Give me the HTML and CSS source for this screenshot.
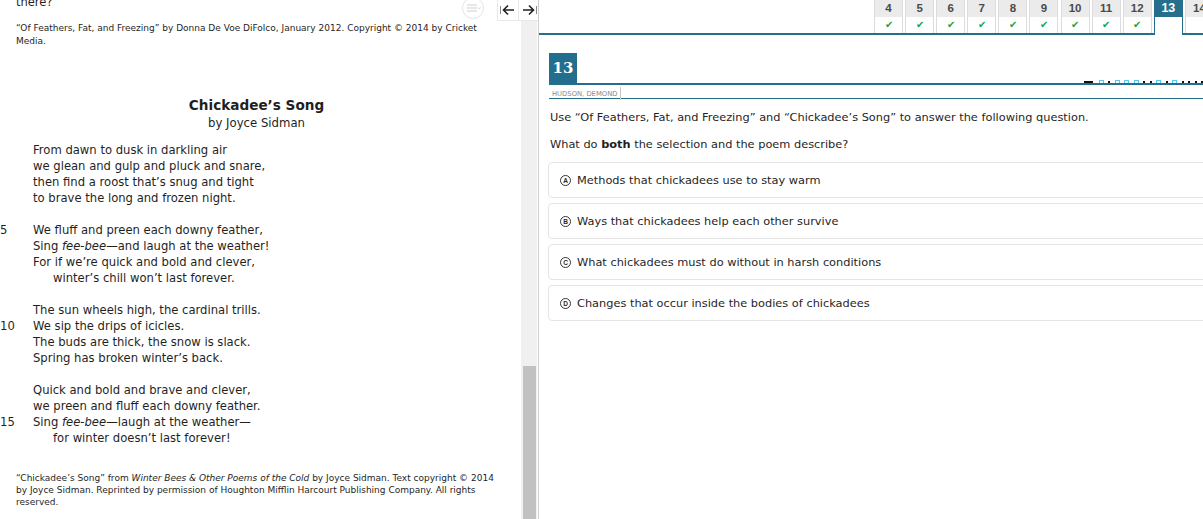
FILE: index.html
```html
<!DOCTYPE html>
<html>
	<head>
		<meta charset="utf-8">
		<title>Item 13</title>
		<link rel="stylesheet" href="styles.css">
	</head>
	<body>
		<div id="main">
			<div class="leftPane">
				<div class="passage">
					<p class="prevText">there?</p>
					<p class="credit">“Of Feathers, Fat, and Freezing” by Donna De Voe DiFolco, January 2012. Copyright © 2014 by Cricket Media.</p>

					<h2 class="poemTitle">Chickadee’s Song</h2>
					<div class="poemBy">by Joyce Sidman</div>

					<div class="poem">
						<div class="stanza">
							<span class="num"></span><span>From dawn to dusk in darkling air</span>
							<span class="num"></span><span>we glean and gulp and pluck and snare,</span>
							<span class="num"></span><span>then find a roost that’s snug and tight</span>
							<span class="num"></span><span>to brave the long and frozen night.</span>
						</div>
						<div class="stanza">
							<span class="num">5</span><span>We fluff and preen each downy feather,</span>
							<span class="num"></span><span>Sing <i>fee-bee</i>—and laugh at the weather!</span>
							<span class="num"></span><span>For if we’re quick and bold and clever,</span>
							<span class="num"></span><span class="indent">winter’s chill won’t last forever.</span>
						</div>
						<div class="stanza">
							<span class="num"></span><span>The sun wheels high, the cardinal trills.</span>
							<span class="num">10</span><span>We sip the drips of icicles.</span>
							<span class="num"></span><span>The buds are thick, the snow is slack.</span>
							<span class="num"></span><span>Spring has broken winter’s back.</span>
						</div>
						<div class="stanza">
							<span class="num"></span><span>Quick and bold and brave and clever,</span>
							<span class="num"></span><span>we preen and fluff each downy feather.</span>
							<span class="num">15</span><span>Sing <i>fee-bee</i>—laugh at the weather—</span>
							<span class="num"></span><span class="indent">for winter doesn’t last forever!</span>
						</div>
					</div>

					<p class="credit bottom">“Chickadee’s Song” from <i>Winter Bees &amp; Other Poems of the Cold</i> by Joyce Sidman. Text copyright © 2014 by Joyce Sidman. Reprinted by permission of Houghton Mifflin Harcourt Publishing Company. All rights reserved.</p>
				</div>

				<div class="scrollTrack">
					<div class="scrollThumb"></div>
				</div>

				<div class="menuBtn">
					<svg width="22" height="22" viewBox="0 0 22 22">
						<circle cx="11" cy="11" r="10.5" fill="#fff" stroke="#e4e4e4"/>
						<path d="M5 8h10M5 11h10M5 14h10" stroke="#cfcfcf" stroke-width="1.2"/>
						<path d="M16 10.5l1.3 1.3 1.3-1.3" stroke="#cfcfcf" fill="none" stroke-width="0.9"/>
					</svg>
				</div>
				<div class="arrowBtns">
					<div class="arrowBtn">
						<svg width="18" height="14" viewBox="0 0 18 14">
							<path d="M1.5 3v8" stroke="#888" stroke-width="1"/>
							<path d="M15 7H4.5M9 2.5L4.5 7 9 11.5" stroke="#222" stroke-width="1.6" fill="none"/>
						</svg>
					</div>
					<div class="arrowBtn">
						<svg width="18" height="14" viewBox="0 0 18 14">
							<path d="M16.5 3v8" stroke="#888" stroke-width="1"/>
							<path d="M3 7h10.5M9 2.5L13.5 7 9 11.5" stroke="#222" stroke-width="1.6" fill="none"/>
						</svg>
					</div>
				</div>
			</div>

			<div class="rightPane">
				<div class="tabs">
					<div class="tab done"><b>4</b><span class="chk">&#10004;</span></div>
					<div class="tab done"><b>5</b><span class="chk">&#10004;</span></div>
					<div class="tab done"><b>6</b><span class="chk">&#10004;</span></div>
					<div class="tab done"><b>7</b><span class="chk">&#10004;</span></div>
					<div class="tab done"><b>8</b><span class="chk">&#10004;</span></div>
					<div class="tab done"><b>9</b><span class="chk">&#10004;</span></div>
					<div class="tab done"><b>10</b><span class="chk">&#10004;</span></div>
					<div class="tab done"><b>11</b><span class="chk">&#10004;</span></div>
					<div class="tab done"><b>12</b><span class="chk">&#10004;</span></div>
					<div class="tab current"><b>13</b><span class="chk"></span></div>
					<div class="tab"><b>14</b><span class="chk"></span></div>
				</div>

				<div class="itemHead">
					<div class="itemNum">13</div>
					<div class="marks">
						<i class="dash"></i><i class="o"></i><i></i><i class="o"></i><i class="o"></i><i class="o"></i><i></i><i></i><i class="o"></i><i></i><i class="o"></i><i></i><i></i><i></i><i></i>
					</div>
				</div>
				<div class="student">
					<span>HUDSON, DEMOND</span>
				</div>

				<div class="question">
					<p>Use “Of Feathers, Fat, and Freezing” and “Chickadee’s Song” to answer the following question.</p>
					<p>What do <b>both</b> the selection and the poem describe?</p>
				</div>

				<div class="options">
					<div class="option"><span class="letter">A</span>Methods that chickadees use to stay warm</div>
					<div class="option"><span class="letter">B</span>Ways that chickadees help each other survive</div>
					<div class="option"><span class="letter">C</span>What chickadees must do without in harsh conditions</div>
					<div class="option"><span class="letter">D</span>Changes that occur inside the bodies of chickadees</div>
				</div>
			</div>
		</div>
	</body>
</html>
```

FILE: styles.css
```css
html, body {
	margin: 0;
	height: 100%;
	overflow: hidden;
	background: #fff;
}

body {
	font-family: "DejaVu Sans", Verdana, sans-serif;
	color: #1f1f1f;
	font-size: 11.35px;
}

#main {
	display: flex;
	height: 519px;
}

/* left side - the passage */
.leftPane {
	position: relative;
	width: 538px;
	flex: none;
	display: flex;
	border-right: 1px solid #cfcfcf;
	overflow: hidden;
}

.passage {
	flex: 1;
	padding: 0 24px 0 16px;
	margin-top: -6px;
}

.prevText {
	margin: 0;
	font-size: 11.5px;
	line-height: 16px;
}

.credit {
	margin: 12px -8px 0 0;
	font-size: 9px;
	line-height: 13px;
}

.credit.bottom {
	margin-top: 26px;
	line-height: 12px;
}

.poemTitle {
	margin: 48px 0 0;
	text-align: center;
	font-size: 13.6px;
	line-height: 18px;
}

.poemBy {
	text-align: center;
	font-size: 11.7px;
	line-height: 18px;
}

.poem {
	margin: 10px 0 0 -16px;
}

.stanza {
	display: grid;
	grid-template-columns: 33px 1fr;
	line-height: 16px;
	font-size: 11.6px;
	margin-bottom: 16px;
}

.stanza:last-child {
	margin-bottom: 0;
}

.indent {
	padding-left: 20px;
}

.scrollTrack {
	width: 16px;
	flex: none;
	margin-right: 1px;
	background: #f0f0f0;
	display: flex;
	flex-direction: column;
	justify-content: flex-end;
}

.scrollThumb {
	height: 153px;
	margin: 0 1px 0 2px;
	background: #c1c1c1;
}

.menuBtn {
	position: absolute;
	left: 462px;
	top: -3px;
	width: 22px;
	height: 22px;
}

.menuBtn svg {
	display: block;
}

.arrowBtns {
	position: absolute;
	left: 497px;
	top: 0;
	display: flex;
	background: #fff;
	border: 1px solid #e8e8e8;
	border-top: none;
}

.arrowBtn {
	width: 20px;
	height: 20px;
	display: flex;
	align-items: center;
	justify-content: center;
}

.arrowBtn + .arrowBtn {
	border-left: 1px solid #e8e8e8;
}

/* right side - the item */
.rightPane {
	flex: 1;
	min-width: 0;
	overflow: hidden;
	padding-left: 10px;
}

.tabs {
	display: flex;
	gap: 2.1px;
	margin-left: -10px;
	padding-left: 335px;
	border-bottom: 2px solid #256f8d;
	height: 33px;
}

.tab {
	flex: none;
	width: 29px;
	box-sizing: border-box;
	border: 1px solid #dcdcdc;
	border-top: none;
	border-bottom: none;
	display: flex;
	flex-direction: column;
	font-family: "Liberation Sans", Arial, sans-serif;
}

.tab b {
	height: 17px;
	line-height: 17px;
	background: #ebebeb;
	color: #4a4a4a;
	text-align: center;
	font-size: 11.5px;
}

.chk {
	flex: 1;
	text-align: center;
	color: #17a34a;
	font-size: 10px;
	line-height: 16px;
	background: #fff;
}

.tab.current {
	border-color: #256f8d;
	height: 35px;
}

.tab.current b {
	background: #256f8d;
	color: #fff;
	font-size: 12.5px;
}

.itemHead {
	display: flex;
	justify-content: space-between;
	align-items: flex-end;
	margin-top: 18px;
	border-bottom: 2px solid #256f8d;
}

.itemNum {
	width: 28px;
	height: 30px;
	background: #226e8c;
	color: #fff;
	font-family: "DejaVu Serif", "Liberation Serif", serif;
	font-weight: bold;
	font-size: 15px;
	line-height: 30px;
	text-align: center;
}

.marks {
	display: flex;
	align-items: flex-end;
	gap: 4.5px;
}

.marks i {
	width: 2px;
	height: 2px;
	background: #111;
}

.marks i.dash {
	width: 9px;
	margin-right: 1px;
}

.marks i.o {
	width: 3px;
	height: 2px;
	background: none;
	border: 1px solid #55c8f0;
	border-bottom: none;
}

.student {
	border-bottom: 1px solid #256f8d;
	height: 13px;
}

.student span {
	display: inline-block;
	height: 13px;
	padding: 0 3px;
	border-right: 1px solid #c8c8c8;
	font-size: 6.8px;
	line-height: 14px;
	color: #8a8a8a;
}

.question {
	padding: 10px 0 0 1px;
}

.question p {
	margin: 0 0 11px;
	line-height: 16px;
}

.question p + p {
	margin-bottom: 10px;
}

.options {
	display: flex;
	flex-direction: column;
	gap: 5px;
	margin-left: -1px;
	width: 720px;
}

.option {
	height: 34px;
	border: 1px solid #e5e5e5;
	border-radius: 4px;
	display: flex;
	align-items: center;
	padding-left: 11px;
}

.letter {
	width: 9px;
	height: 9px;
	border: 1px solid #333;
	border-radius: 50%;
	font-size: 6.5px;
	font-weight: bold;
	line-height: 9px;
	text-align: center;
	margin-right: 6px;
	font-family: "Liberation Sans", Arial, sans-serif;
}
```
